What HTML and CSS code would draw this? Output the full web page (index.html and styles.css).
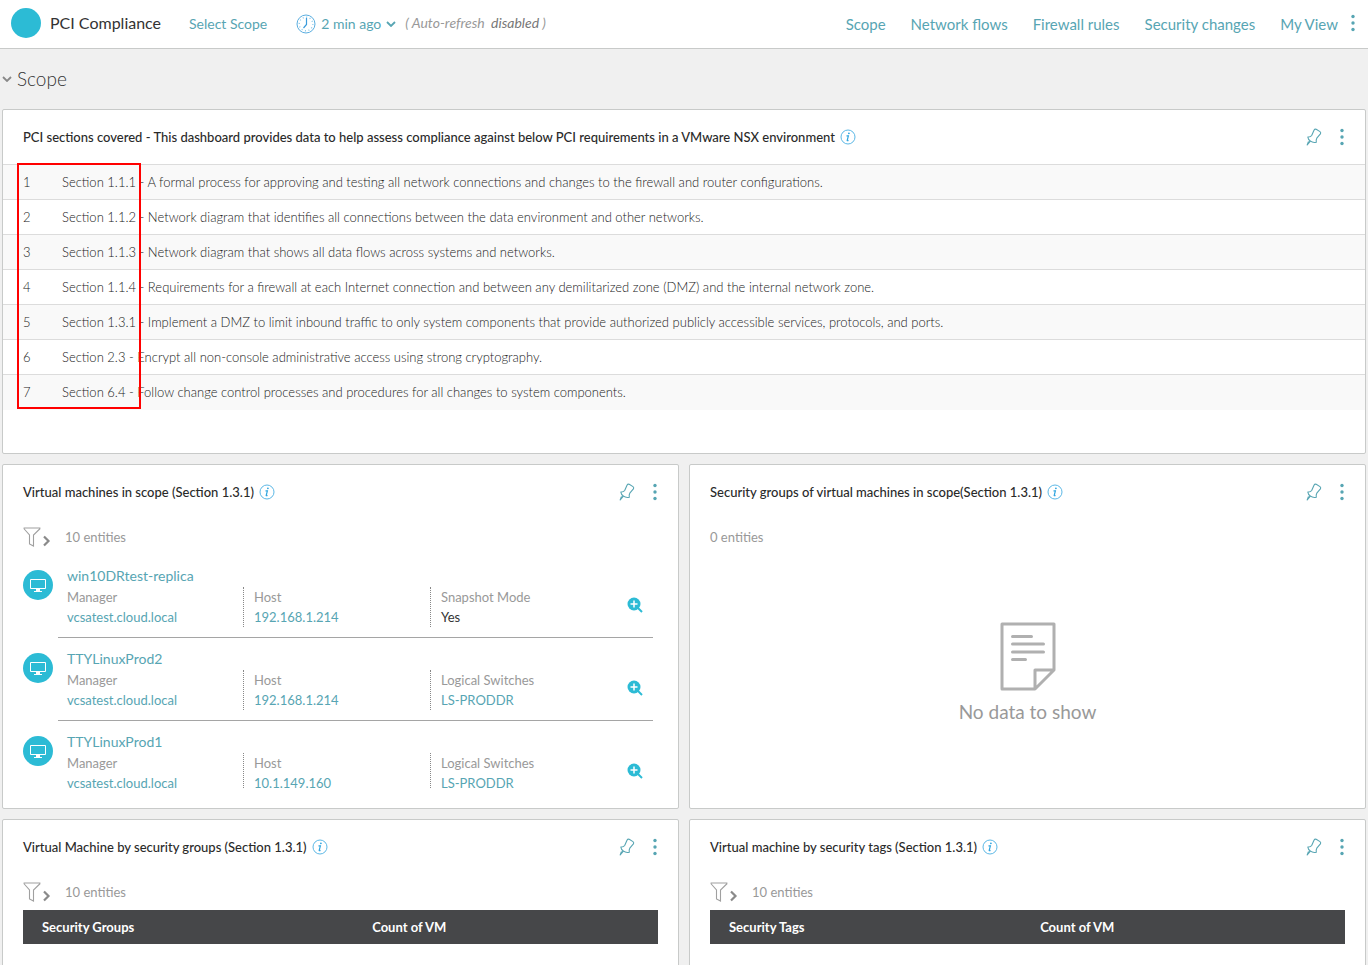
FILE: index.html
```html
<!DOCTYPE html>
<html lang="en">
<head>
<meta charset="utf-8">
<title>PCI Compliance</title>
<link rel="stylesheet" href="styles.css">
</head>
<body>
<svg class="sprite" aria-hidden="true">
  <symbol id="pin" viewBox="0 0 16 18"><path d="M8 2.200Q8.800.8 10.200 1.300L14 3.600Q15.200 4.600 14.400 5.900L10.800 10.200Q9.800 12 10.300 14.300 6.600 15 4.600 13.200 2 11.600 1.800 9q3 .2 4-1.800ZM4.400 13.200 1.200 17l1.300-3.500M1.600 15.800 4.400 12.600" fill="none" stroke="currentColor" stroke-width="1.1" stroke-linejoin="round"/></symbol>
  <symbol id="dots" viewBox="0 0 4 18"><g fill="currentColor"><circle cx="2" cy="2.500" r="1.700"/><circle cx="2" cy="9" r="1.700"/><circle cx="2" cy="15.500" r="1.700"/></g></symbol>
  <symbol id="info" viewBox="0 0 16 16"><circle cx="8" cy="8" r="7" fill="none" stroke="#5cb8e6"/><path d="M6.500 6.800h1.900L7.200 11.300q-.1.700 1.300.1" fill="none" stroke="#2fa5df" stroke-width="1.200"/><circle cx="8.900" cy="4.300" r=".9" fill="#2fa5df"/></symbol>
  <symbol id="funnel" viewBox="0 0 28 22"><path d="M.6 2h16.800M.8 2.500 6.500 9v9l4 2V9L17.200 2.500" fill="none" stroke="#a0a0a0" stroke-width="1.100"/><path d="m21 10.500 4.500 4.500L21 19.500" fill="none" stroke="#8a8a8a" stroke-width="2.200"/></symbol>
  <symbol id="vm" viewBox="0 0 30 30"><circle cx="15" cy="15" r="15" fill="#2cbbd5"/><path d="M7.500 9.500h15v9h-15z" fill="none" stroke="#fff"/><path d="M13 19h4v2h2v1h-8v-1h2z" fill="#fff"/></symbol>
  <symbol id="magnify" viewBox="0 0 16 16"><circle cx="7" cy="7" r="6.500" fill="#2cbbd5"/><path d="m11 11 4 4" stroke="#2cbbd5" stroke-width="2"/><path d="M7 3.500v7M3.500 7h7" stroke="#fff" stroke-width="1.500"/></symbol>
  <symbol id="chevron" viewBox="0 0 10 6"><path d="m1 1 4 4 4-4" fill="none" stroke="currentColor" stroke-width="1.800"/></symbol>
</svg>

<div class="app">
  <header class="topbar">
    <span class="logo"></span>
    <h1 class="title">PCI Compliance</h1>
    <a class="select-scope" href="#">Select Scope</a>
    <button class="time" type="button">
      <svg class="clock" viewBox="0 0 20 20" aria-hidden="true"><circle cx="10" cy="10" r="9" fill="none" stroke="#5aaee0"/><circle cx="10" cy="10" r="6.800" fill="none" stroke="#8cc9ea" stroke-width="1.400" stroke-dasharray="1 2.560"/><path d="M10.500 4v6.500L7.500 14" fill="none" stroke="#3a9bdc" stroke-width="1.200"/></svg>
      2 min ago
      <svg class="chev" aria-hidden="true"><use href="#chevron"/></svg>
    </button>
    <span class="refresh">( Auto-refresh <b>disabled</b> )</span>
    <nav class="nav">
      <a href="#">Scope</a><a href="#">Network flows</a><a href="#">Firewall rules</a><a href="#">Security changes</a><a href="#">My View</a>
    </nav>
    <button class="icon-btn" type="button" aria-label="More"><svg class="dots"><use href="#dots"/></svg></button>
  </header>

  <main class="board">
    <h2 class="group"><svg class="chev" aria-hidden="true"><use href="#chevron"/></svg>Scope</h2>

    <section class="card wide">
      <div class="head">
        <h3>PCI sections covered - This dashboard provides data to help assess compliance against below PCI requirements in a VMware NSX environment</h3>
        <svg class="info"><use href="#info"/></svg>
        <div class="tools"><button class="icon-btn" type="button" aria-label="Pin"><svg class="pin"><use href="#pin"/></svg></button><button class="icon-btn" type="button" aria-label="More"><svg class="dots"><use href="#dots"/></svg></button></div>
      </div>
      <div class="sections">
        <table>
          <tbody>
            <tr><td>1</td><td>Section 1.1.1 - A formal process for approving and testing all network connections and changes to the firewall and router configurations.</td></tr>
            <tr><td>2</td><td>Section 1.1.2 - Network diagram that identifies all connections between the data environment and other networks.</td></tr>
            <tr><td>3</td><td>Section 1.1.3 - Network diagram that shows all data flows across systems and networks.</td></tr>
            <tr><td>4</td><td>Section 1.1.4 - Requirements for a firewall at each Internet connection and between any demilitarized zone (DMZ) and the internal network zone.</td></tr>
            <tr><td>5</td><td>Section 1.3.1 - Implement a DMZ to limit inbound traffic to only system components that provide authorized publicly accessible services, protocols, and ports.</td></tr>
            <tr><td>6</td><td>Section 2.3 - Encrypt all non-console administrative access using strong cryptography.</td></tr>
            <tr><td>7</td><td>Section 6.4 - Follow change control processes and procedures for all changes to system components.</td></tr>
          </tbody>
        </table>
        <div class="highlight"></div>
      </div>
    </section>

    <section class="card">
      <div class="head">
        <h3>Virtual machines in scope (Section 1.3.1)</h3>
        <svg class="info"><use href="#info"/></svg>
        <div class="tools"><button class="icon-btn" type="button" aria-label="Pin"><svg class="pin"><use href="#pin"/></svg></button><button class="icon-btn" type="button" aria-label="More"><svg class="dots"><use href="#dots"/></svg></button></div>
      </div>
      <div class="count"><button class="icon-btn" type="button" aria-label="Filter"><svg class="funnel"><use href="#funnel"/></svg></button>10 entities</div>
      <ul class="vms">
        <li>
          <svg class="vm"><use href="#vm"/></svg>
          <div class="vm-body">
            <a class="name" href="#">win10DRtest-replica</a>
            <dl>
              <div><dt>Manager</dt><dd><a href="#">vcsatest.cloud.local</a></dd></div>
              <div><dt>Host</dt><dd><a href="#">192.168.1.214</a></dd></div>
              <div><dt>Snapshot Mode</dt><dd>Yes</dd></div>
            </dl>
          </div>
          <button class="icon-btn" type="button" aria-label="Details"><svg class="magnify"><use href="#magnify"/></svg></button>
        </li>
        <li>
          <svg class="vm"><use href="#vm"/></svg>
          <div class="vm-body">
            <a class="name" href="#">TTYLinuxProd2</a>
            <dl>
              <div><dt>Manager</dt><dd><a href="#">vcsatest.cloud.local</a></dd></div>
              <div><dt>Host</dt><dd><a href="#">192.168.1.214</a></dd></div>
              <div><dt>Logical Switches</dt><dd><a href="#">LS-PRODDR</a></dd></div>
            </dl>
          </div>
          <button class="icon-btn" type="button" aria-label="Details"><svg class="magnify"><use href="#magnify"/></svg></button>
        </li>
        <li>
          <svg class="vm"><use href="#vm"/></svg>
          <div class="vm-body">
            <a class="name" href="#">TTYLinuxProd1</a>
            <dl>
              <div><dt>Manager</dt><dd><a href="#">vcsatest.cloud.local</a></dd></div>
              <div><dt>Host</dt><dd><a href="#">10.1.149.160</a></dd></div>
              <div><dt>Logical Switches</dt><dd><a href="#">LS-PRODDR</a></dd></div>
            </dl>
          </div>
          <button class="icon-btn" type="button" aria-label="Details"><svg class="magnify"><use href="#magnify"/></svg></button>
        </li>
      </ul>
    </section>

    <section class="card">
      <div class="head">
        <h3>Security groups of virtual machines in scope(Section 1.3.1)</h3>
        <svg class="info"><use href="#info"/></svg>
        <div class="tools"><button class="icon-btn" type="button" aria-label="Pin"><svg class="pin"><use href="#pin"/></svg></button><button class="icon-btn" type="button" aria-label="More"><svg class="dots"><use href="#dots"/></svg></button></div>
      </div>
      <div class="count">0 entities</div>
      <div class="empty">
        <svg class="doc" viewBox="0 0 56 69" aria-hidden="true"><path d="M2 2h52v46L35 67H2ZM35 67V48h19" fill="none" stroke="#b0b0b0" stroke-width="3" stroke-linejoin="round"/><path d="M12.500 14.500h19M12.500 22h31M12.500 30h31M12.500 37.500h13" stroke="#b0b0b0" stroke-width="3" stroke-linecap="round"/></svg>
        <p>No data to show</p>
      </div>
    </section>

    <section class="card">
      <div class="head">
        <h3>Virtual Machine by security groups (Section 1.3.1)</h3>
        <svg class="info"><use href="#info"/></svg>
        <div class="tools"><button class="icon-btn" type="button" aria-label="Pin"><svg class="pin"><use href="#pin"/></svg></button><button class="icon-btn" type="button" aria-label="More"><svg class="dots"><use href="#dots"/></svg></button></div>
      </div>
      <div class="count"><button class="icon-btn" type="button" aria-label="Filter"><svg class="funnel"><use href="#funnel"/></svg></button>10 entities</div>
      <table class="counts groups"><thead><tr><th>Security Groups</th><th>Count of VM</th></tr></thead></table>
    </section>

    <section class="card">
      <div class="head">
        <h3>Virtual machine by security tags (Section 1.3.1)</h3>
        <svg class="info"><use href="#info"/></svg>
        <div class="tools"><button class="icon-btn" type="button" aria-label="Pin"><svg class="pin"><use href="#pin"/></svg></button><button class="icon-btn" type="button" aria-label="More"><svg class="dots"><use href="#dots"/></svg></button></div>
      </div>
      <div class="count"><button class="icon-btn" type="button" aria-label="Filter"><svg class="funnel"><use href="#funnel"/></svg></button>10 entities</div>
      <table class="counts tags"><thead><tr><th>Security Tags</th><th>Count of VM</th></tr></thead></table>
    </section>
  </main>
</div>
</body>
</html>
```
FILE: styles.css
```css
* { box-sizing: border-box; }
body { margin: 0; font: 13px/20px Lato, "Open Sans", sans-serif; color: #565656; background: #f0f0f0; }
h1, h2, h3, p, ul, dl, dd { margin: 0; padding: 0; }
ul { list-style: none; }
a { color: #57a5b3; text-decoration: none; }
svg { display: block; flex: none; }
button { font: inherit; color: #57a5b3; background: none; border: 0; padding: 0; cursor: pointer; }
.sprite { display: none; }
.app { height: 100vh; display: flex; flex-direction: column; overflow: hidden; }

.topbar { display: flex; align-items: center; flex: none; padding: 0 13px 2px 11px; height: 49px; background: #fff; border-bottom: 1px solid #c8cac9; }
.logo { width: 30px; height: 30px; border-radius: 50%; background: #2cbbd5; margin-right: 9px; }
.title { font-size: 16px; font-weight: 400; color: #333; margin-right: 28px; }
.select-scope, .time { font-size: 14px; padding-top: 2px; }
.select-scope { margin-right: 29px; }
.time { display: flex; align-items: center; gap: 5px; margin-right: 9px; }
.clock { width: 20px; height: 20px; }
.chev { width: 10px; height: 6px; }
.refresh { font-size: 14px; font-style: italic; color: #999; }
.refresh b { font-weight: 400; color: #777; margin-left: 3px; }
.nav { display: flex; gap: 25px; margin: 2px 13px 0 auto; font-size: 15px; }
.dots { width: 4px; height: 18px; }
.pin { width: 16px; height: 18px; }
.info { width: 16px; height: 16px; }
.funnel { width: 28px; height: 22px; }
.vm { width: 30px; height: 30px; }
.magnify { width: 16px; height: 16px; }

.board { flex: 1; min-height: 0; overflow: hidden; display: grid; grid-template-columns: 1fr 1fr; grid-auto-rows: 345px; grid-template-rows: 50px; gap: 10px; padding: 0 2px; }
.group { grid-column: 1 / -1; display: flex; align-items: center; gap: 5px; padding-top: 10px; font-size: 19px; font-weight: 300; color: #333; }
.group .chev { color: #888; }
.card { background: #fff; border: 1px solid #c8cac9; border-radius: 2px; min-width: 0; }
.wide { grid-column: 1 / -1; }
.head { display: flex; align-items: center; gap: 5px; height: 54px; padding: 0 20px; }
.head h3 { font-size: 13px; font-weight: 500; color: #2a2a2a; }
.tools { display: flex; align-items: center; gap: 18px; margin-left: auto; padding-right: 1px; }

.sections { position: relative; }
.sections table { width: 100%; border-collapse: collapse; }
.sections td { height: 35px; padding: 0 20px 0 0; border-top: 1px solid #dcdcdc; font-weight: 300; color: #222; }
.sections td:first-child { width: 59px; padding: 0 0 0 20px; }
.sections tr:nth-child(odd) { background: #f9f9f9; }
.highlight { position: absolute; left: 14px; top: -1px; width: 124px; height: 246px; border: 2px solid #f00; }

.count { display: flex; align-items: center; gap: 14px; height: 36px; padding: 0 20px; color: #999; }
.vms { margin-right: 25px; }
.vms li { display: flex; height: 83px; padding-left: 20px; }
.vms .vm { margin-top: 15px; }
.vm-body { flex: 1; margin-left: 5px; padding: 11px 0 0 9px; border-bottom: 1px solid #a5a5a5; }
.vms li > .icon-btn { display: flex; align-items: flex-start; width: 36px; padding: 42px 0 0 10px; border-bottom: 1px solid #a5a5a5; }
.vms li:last-child > * { border-bottom: 0; }
.name { display: block; font-size: 14px; line-height: 20px; }
.vm-body dl { display: grid; grid-template-columns: 16fr 17fr 17fr; margin-top: 1px; }
.vm-body dl > div { height: 40px; }
.vms li:last-child dl > div { height: 35px; }
.vm-body dl > div + div { padding-left: 10px; border-left: 1px dotted #888; }
.vm-body dt { color: #999; }
.vm-body dd { color: #333; }

.empty { display: flex; flex-direction: column; align-items: center; gap: 11px; padding-top: 67px; }
.doc { width: 56px; height: 69px; }
.empty p { font-size: 19px; color: #999; }

.counts { width: calc(100% - 40px); margin: 0 20px; border-collapse: collapse; table-layout: fixed; }
.counts th { height: 34px; padding: 0 0 0 19px; text-align: left; font-weight: 700; color: #fff; background: #464749; }
.groups th:first-child { width: 52%; }
.tags th:first-child { width: 49%; }
```
